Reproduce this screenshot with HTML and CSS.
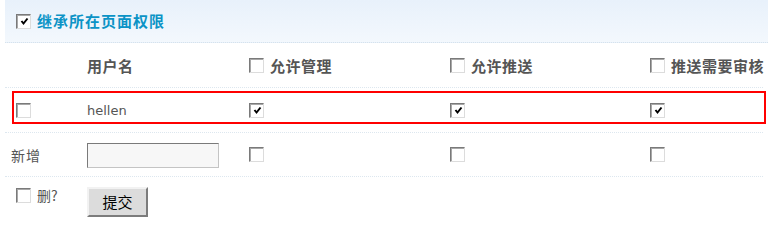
FILE: index.html
```html
<!DOCTYPE html>
<html lang="zh">
<head>
<meta charset="utf-8">
<title>权限</title>
<link rel="stylesheet" href="styles.css">
</head>
<body>
<div class="panel">
  <div class="inherit">
    <span class="cb on"><svg viewBox="0 0 11 11" width="11" height="11"><path d="M2.5 5 L4.5 7.5 L8.5 2.5" fill="none" stroke="#000" stroke-width="2"/></svg></span>
    <span class="inherit-label">继承所在页面权限</span>
  </div>

  <div class="row head">
    <div class="cell"></div>
    <div class="cell">用户名</div>
    <div class="cell"><span class="cb"></span><span class="lbl">允许管理</span></div>
    <div class="cell"><span class="cb"></span><span class="lbl">允许推送</span></div>
    <div class="cell"><span class="cb"></span><span class="lbl">推送需要审核</span></div>
  </div>

  <div class="row user">
    <div class="hl">
      <div class="cell"><span class="cb first"></span></div>
      <div class="cell name">hellen</div>
      <div class="cell"><span class="cb on"><svg viewBox="0 0 11 11" width="11" height="11"><path d="M2.5 5 L4.5 7.5 L8.5 2.5" fill="none" stroke="#000" stroke-width="2"/></svg></span></div>
      <div class="cell"><span class="cb on"><svg viewBox="0 0 11 11" width="11" height="11"><path d="M2.5 5 L4.5 7.5 L8.5 2.5" fill="none" stroke="#000" stroke-width="2"/></svg></span></div>
      <div class="cell"><span class="cb on"><svg viewBox="0 0 11 11" width="11" height="11"><path d="M2.5 5 L4.5 7.5 L8.5 2.5" fill="none" stroke="#000" stroke-width="2"/></svg></span></div>
    </div>
  </div>

  <div class="row add">
    <div class="cell add-label">新增</div>
    <div class="cell"><span class="field"></span></div>
    <div class="cell"><span class="cb"></span></div>
    <div class="cell"><span class="cb"></span></div>
    <div class="cell"><span class="cb"></span></div>
  </div>

  <div class="row foot">
    <div class="cell del"><span class="cb"></span><span class="del-label">删?</span></div>
    <div class="cell"><span class="btn">提交</span></div>
  </div>
</div>
</body>
</html>
```

FILE: styles.css
```css
html, body {
  margin: 0;
  padding: 0;
  background: #fff;
}
body {
  font-family: "Noto Sans CJK SC", "DejaVu Sans", sans-serif;
  color: #555;
  overflow: hidden;
}
.panel {
  margin-left: 5px;
  width: 763px;
}
.inherit {
  height: 42px;
  display: flex;
  align-items: center;
  padding-left: 11px;
  gap: 6px;
  background: linear-gradient(#e8f1fb, #f3f8fd);
  border-bottom: 1px dotted #d6e2ec;
}
.inherit-label {
  color: #0b93c6;
  font-weight: bold;
  font-size: 15px;
  letter-spacing: 1px;
  line-height: 16px;
}
.row {
  width: 758px;
  display: grid;
  grid-template-columns: 82px 162px 201px 200px 1fr;
  align-items: center;
  border-bottom: 1px dotted #dde7ef;
  box-sizing: border-box;
}
.cell {
  display: flex;
  align-items: center;
  white-space: nowrap;
}
.head {
  height: 45px;
  font-weight: bold;
  font-size: 15px;
  letter-spacing: 0.5px;
  color: #555;
}
.head .cell {
  gap: 6px;
}
.user {
  display: block;
  height: 45px;
  padding: 3px 0 8px 7px;
}
.hl {
  width: 754px;
  height: 33px;
  box-sizing: border-box;
  border: 2px solid #f00;
  display: grid;
  grid-template-columns: 73px 162px 201px 200px 1fr;
  align-items: center;
  padding-top: 5px;
}
.cb.first {
  margin-left: 2px;
}
.name {
  font-family: "DejaVu Sans", sans-serif;
  font-size: 13px;
  color: #555;
}
.add {
  height: 44px;
}
.add-label {
  padding-left: 6px;
  font-size: 14px;
  letter-spacing: 1px;
  color: #555;
}
.field {
  display: block;
  width: 132px;
  height: 25px;
  box-sizing: border-box;
  background: #f7f7f7;
  border-top: 1px solid #7a7a7a;
  border-left: 1px solid #7a7a7a;
  border-right: 1px solid #c4c4c4;
  border-bottom: 1px solid #c4c4c4;
  margin-top: 1px;
}
.foot {
  border-bottom: none;
  align-items: start;
  height: 40px;
}
.del {
  padding-left: 11px;
  padding-top: 11px;
  gap: 6px;
}
.del-label {
  font-size: 14px;
  color: #555;
  line-height: 15px;
}
.foot .btn {
  margin-top: 10px;
}
.btn {
  display: flex;
  align-items: center;
  justify-content: center;
  width: 61px;
  height: 30px;
  box-sizing: border-box;
  background: #dcdcdc;
  border-top: 2px solid #f2f2f2;
  border-left: 2px solid #f2f2f2;
  border-right: 2px solid #7c7c7c;
  border-bottom: 2px solid #7c7c7c;
  color: #000;
  font-size: 15px;
  padding-bottom: 2px;
}
.cb {
  display: inline-flex;
  align-items: center;
  justify-content: center;
  width: 15px;
  height: 15px;
  box-sizing: border-box;
  flex: none;
  background: #fff;
  border-top: 1px solid #7a7a7a;
  border-left: 1px solid #7a7a7a;
  border-right: 1px solid #dcdcdc;
  border-bottom: 1px solid #dcdcdc;
  box-shadow: inset 1px 1px 0 #a8a8a8;
}
.cb svg {
  display: block;
  margin: 1px 0 0 1px;
}
```
